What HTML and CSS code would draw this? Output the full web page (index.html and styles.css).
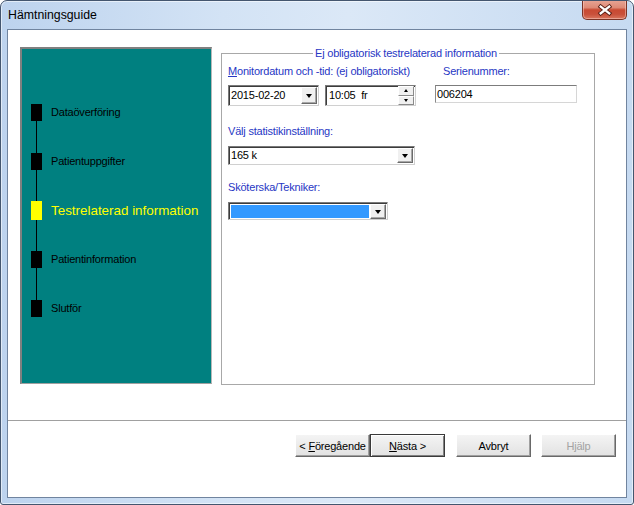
FILE: index.html
```html
<!DOCTYPE html>
<html lang="sv">
<head>
<meta charset="utf-8">
<title>Hämtningsguide</title>
<link rel="stylesheet" href="styles.css">
</head>
<body>
<div class="window">
  <div class="titlebar">
    <span class="title">Hämtningsguide</span>
    <button class="close" type="button" aria-label="Stäng">
      <svg width="45" height="19" viewBox="0 0 45 19">
        <g stroke-linecap="square">
          <path d="M18.5 6.5 L27.5 13.5 M27.5 6.5 L18.5 13.5" stroke="#5b2118" stroke-width="4.4" fill="none"/>
          <path d="M18.5 6.5 L27.5 13.5 M27.5 6.5 L18.5 13.5" stroke="#ffffff" stroke-width="2.4" fill="none"/>
        </g>
      </svg>
    </button>
  </div>
  <div class="client">
    <div class="main">
      <div class="steps-panel">
        <ul class="steps">
          <li class="step"><span class="marker"></span><span class="step-label">Dataöverföring</span></li>
          <li class="step"><span class="marker"></span><span class="step-label">Patientuppgifter</span></li>
          <li class="step active"><span class="marker"></span><span class="step-label">Testrelaterad information</span></li>
          <li class="step"><span class="marker"></span><span class="step-label">Patientinformation</span></li>
          <li class="step"><span class="marker"></span><span class="step-label">Slutför</span></li>
        </ul>
      </div>
      <fieldset class="group">
        <legend class="group-title">Ej obligatorisk testrelaterad information</legend>
        <div class="row-top">
          <div class="col-date">
            <div class="lbl"><u>M</u>onitordatum och -tid: (ej obligatoriskt)</div>
            <div class="datetime">
              <div class="field date">
                <span class="field-text">2015-02-20</span>
                <span class="ddbtn"><span class="arrow"></span></span>
              </div>
              <div class="field time">
                <span class="field-text">10:05&nbsp; fr</span>
                <span class="spin">
                  <span class="spin-half"><span class="arrow-up"></span></span>
                  <span class="spin-half"><span class="arrow-down"></span></span>
                </span>
              </div>
            </div>
          </div>
          <div class="col-serial">
            <div class="lbl serial-lbl">Serienummer:</div>
            <div class="edit">006204</div>
          </div>
        </div>
        <div class="lbl lbl-stat">Välj statistikinställning:</div>
        <div class="field combo combo-stat">
          <span class="field-text">165 k</span>
          <span class="ddbtn"><span class="arrow"></span></span>
        </div>
        <div class="lbl lbl-nurse">Sköterska/Tekniker:</div>
        <div class="field combo combo-nurse">
          <span class="selection"></span>
          <span class="ddbtn"><span class="arrow"></span></span>
        </div>
      </fieldset>
    </div>
    <div class="separator"></div>
    <div class="buttons">
      <button class="btn" type="button">&lt; <u>F</u>öregående</button>
      <button class="btn default" type="button"><u>N</u>ästa &gt;</button>
      <button class="btn gap-cancel" type="button">Avbryt</button>
      <button class="btn gap-help disabled" type="button">Hjälp</button>
    </div>
  </div>
</div>
</body>
</html>
```

FILE: styles.css
```css
html, body {
  margin: 0;
  padding: 0;
  background: #ffffff;
}

body {
  width: 634px;
  height: 505px;
  overflow: hidden;
  font-family: "Liberation Sans", Arial, sans-serif;
  font-size: 11px;
  letter-spacing: -0.2px;
  color: #000;
}

.window {
  width: 634px;
  height: 505px;
  box-sizing: border-box;
  border: 1px solid #44566f;
  border-radius: 7px 7px 3px 3px;
  background: linear-gradient(to right, #bdd3ee 0%, #d3e3f5 35%, #dbe8f7 55%, #c6daf1 100%);
  box-shadow: inset 0 0 0 1px rgba(255, 255, 255, 0.55);
  display: flex;
  flex-direction: column;
  overflow: hidden;
}

.titlebar {
  height: 28px;
  display: flex;
  align-items: flex-start;
  flex: none;
}

.title {
  padding: 7px 0 0 7px;
  font-size: 12.3px;
  line-height: 14px;
  letter-spacing: 0;
  color: #000;
}

.close {
  margin: -1px 6px 0 auto;
  width: 45px;
  height: 20px;
  padding: 0;
  border: 1px solid #7a3326;
  border-top: none;
  border-radius: 0 0 5px 5px;
  background: linear-gradient(to bottom, #e8a696 0%, #de8a76 40%, #c94a32 52%, #c9503a 75%, #d9765e 100%);
  box-shadow: inset 0 0 0 1px rgba(255, 220, 210, 0.45);
  display: flex;
  align-items: center;
  justify-content: center;
}

.close svg {
  display: block;
}

.client {
  margin: 0 6px 6px 6px;
  border: 1px solid #70849f;
  background: #ffffff;
  flex: 1;
  display: flex;
  flex-direction: column;
}

.main {
  height: 390px;
  box-sizing: border-box;
  padding: 17px 0 0 12px;
  display: flex;
  align-items: flex-start;
}

/* Left step panel */
.steps-panel {
  width: 192px;
  height: 337px;
  box-sizing: border-box;
  background: #008080;
  border-style: solid;
  border-width: 2px 1px 1px 2px;
  border-color: #808080 #b8b8b8 #a0a0a0 #808080;
  flex: none;
}

.steps {
  list-style: none;
  margin: 55px 0 0 0;
  padding: 0 0 0 9px;
  position: relative;
  display: flex;
  flex-direction: column;
  gap: 32px;
}

.steps::before {
  content: "";
  position: absolute;
  left: 14px;
  top: 8px;
  bottom: 8px;
  width: 1px;
  background: #000;
}

.step {
  height: 17px;
  display: flex;
  align-items: center;
  position: relative;
}

.marker {
  width: 11px;
  height: 17px;
  background: #000;
  flex: none;
}

.step-label {
  margin-left: 9px;
  line-height: 13px;
  white-space: nowrap;
  color: #000;
}

.step.active .marker {
  background: #ffff00;
  height: 19px;
}

.step.active .step-label {
  color: #ffff00;
  font-size: 13.4px;
  letter-spacing: 0;
  line-height: 16px;
}

/* Group box */
.group {
  margin: 0 0 0 9px;
  padding: 0 0 0 6px;
  width: 374px;
  height: 338px;
  box-sizing: border-box;
  border: 1px solid #a8a8a8;
  min-width: 0;
  flex: none;
}

.group-title {
  margin-left: 85px;
  padding: 0 2px;
  line-height: 13px;
  color: #2737c4;
}

.lbl {
  line-height: 13px;
  color: #2737c4;
  white-space: nowrap;
}

.row-top {
  margin-top: 5px;
  display: flex;
  align-items: flex-start;
}

.col-date {
  width: 188px;
  flex: none;
}

.datetime {
  margin-top: 7px;
  display: flex;
  gap: 6px;
}

.col-serial {
  margin-left: 19px;
  width: 142px;
  flex: none;
}

.serial-lbl {
  margin-left: 8px;
}

.edit {
  margin-top: 7px;
  height: 18px;
  box-sizing: border-box;
  border: 1px solid;
  border-color: #7c7c7c #d6d6d6 #d6d6d6 #8a8a8a;
  padding: 0 0 0 1px;
  line-height: 16px;
  color: #000;
}

/* Sunken fields */
.field {
  box-sizing: border-box;
  border: 1px solid;
  border-color: #7a7a7a #d0d0d0 #d0d0d0 #7a7a7a;
  box-shadow: inset 1px 1px 0 #3c3c3c;
  background: #fff;
  display: flex;
  align-items: center;
  position: relative;
}

.field-text {
  padding-left: 2px;
  flex: 1;
  white-space: pre;
  line-height: 13px;
}

.date,
.time {
  width: 91px;
  height: 21px;
}

.time .field-text {
  padding-left: 3px;
}

.ddbtn {
  width: 16px;
  height: 15px;
  margin-right: 1px;
  box-sizing: border-box;
  background: #f0f0f0;
  border: 1px solid;
  border-color: #ffffff #6a6a6a #6a6a6a #ffffff;
  box-shadow: inset -1px -1px 0 #a8a8a8;
  display: flex;
  align-items: center;
  justify-content: center;
  flex: none;
}

.date .ddbtn {
  height: 17px;
}

.arrow {
  width: 0;
  height: 0;
  border-left: 3.5px solid transparent;
  border-right: 3.5px solid transparent;
  border-top: 4px solid #000;
  margin-top: 1px;
}

.spin {
  width: 16px;
  height: 19px;
  margin-right: 1px;
  display: flex;
  flex-direction: column;
  flex: none;
}

.spin-half {
  flex: 1;
  box-sizing: border-box;
  background: #f0f0f0;
  border: 1px solid;
  border-color: #ffffff #8a8a8a #8a8a8a #ffffff;
  display: flex;
  align-items: center;
  justify-content: center;
}

.arrow-up {
  width: 0;
  height: 0;
  border-left: 2.5px solid transparent;
  border-right: 2.5px solid transparent;
  border-bottom: 3px solid #000;
}

.arrow-down {
  width: 0;
  height: 0;
  border-left: 2.5px solid transparent;
  border-right: 2.5px solid transparent;
  border-top: 3px solid #000;
}

.lbl-stat {
  margin-top: 19px;
}

.combo-stat {
  margin-top: 8px;
  width: 187px;
  height: 19px;
}

.lbl-nurse {
  margin-top: 16px;
}

.combo-nurse {
  margin-top: 8px;
  width: 160px;
  height: 18px;
}

.selection {
  flex: 1;
  height: 13px;
  margin: 0 1px 0 2px;
  background: #3399ff;
}

.separator {
  height: 1px;
  background: #a0a0a0;
  flex: none;
}

/* Buttons */
.buttons {
  display: flex;
  justify-content: flex-end;
  padding: 13px 10px 0 0;
}

.btn {
  width: 75px;
  height: 23px;
  box-sizing: border-box;
  margin: 0;
  padding: 0;
  font-family: "Liberation Sans", Arial, sans-serif;
  font-size: 11px;
  letter-spacing: -0.2px;
  color: #000;
  background: linear-gradient(to bottom, #f4f4f4 0%, #ebebeb 50%, #e2e2e2 100%);
  border: 1px solid;
  border-color: #ffffff #696969 #696969 #ffffff;
  box-shadow: inset -1px -1px 0 #a0a0a0;
}

.btn.default {
  border-color: #3a3a3a;
  box-shadow: inset 1px 1px 0 #ffffff, inset -1px -1px 0 #808080;
}

.gap-cancel {
  margin-left: 11px;
}

.gap-help {
  margin-left: 10px;
}

.btn.disabled {
  color: #a3a3a3;
}
```
